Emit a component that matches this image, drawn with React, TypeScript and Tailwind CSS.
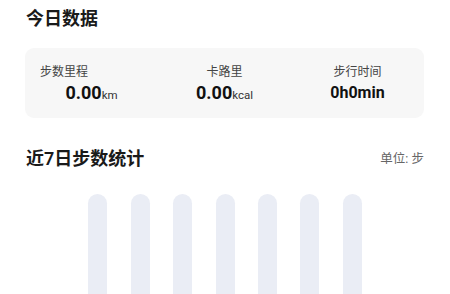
import React from "react";

const font = { fontFamily: 'Roboto, "Noto Sans CJK SC", sans-serif' };

function Stat({ label, value, unit, first, small }: { label: string; value: string; unit: string; first?: boolean; small?: boolean }) {
  return (
    <div className="flex-1 flex flex-col items-center pt-[16px]">
      <div className={`text-[12px] leading-[16px] text-[#444] ${first ? "self-start pl-[15px]" : ""}`}>{label}</div>
      <div className="mt-[3px] leading-[20px] text-[#111]">
        <span className={`${small ? "text-[16px]" : "text-[18px]"} font-bold`}>{value}</span>
        <span className="text-[11.5px] text-[#333]">{unit}</span>
      </div>
    </div>
  );
}

export default function App() {
  const bars = [0, 1, 2, 3, 4, 5, 6];
  return (
    <div className="w-[450px] h-[294px] overflow-hidden bg-white px-[25px]" style={font}>
      <div className="pt-[7px] pl-[1px] text-[18px] leading-[24px] font-semibold text-[#1a1a1a]">今日数据</div>
      <div className="mt-[17px] h-[70px] w-[399px] rounded-[9px] bg-[#f7f7f7] flex">
        <Stat label="步数里程" value="0.00" unit="km" first />
        <Stat label="卡路里" value="0.00" unit="kcal" />
        <Stat label="步行时间" value="0h0min" unit="" small />
      </div>
      <div className="mt-[29px] flex items-center justify-between">
        <div className="pl-[1px] text-[18px] leading-[24px] font-semibold text-[#1a1a1a]">近7日步数统计</div>
        <div className="text-[12.5px] leading-[24px] text-[#666] pr-[1px]">单位: 步</div>
      </div>
      <div className="mt-[23px] flex justify-center gap-[23.4px]">
        {bars.map((b) => (
          <div key={b} className="w-[19px] h-[140px] rounded-t-full bg-[#eaedf5]" />
        ))}
      </div>
    </div>
  );
}
